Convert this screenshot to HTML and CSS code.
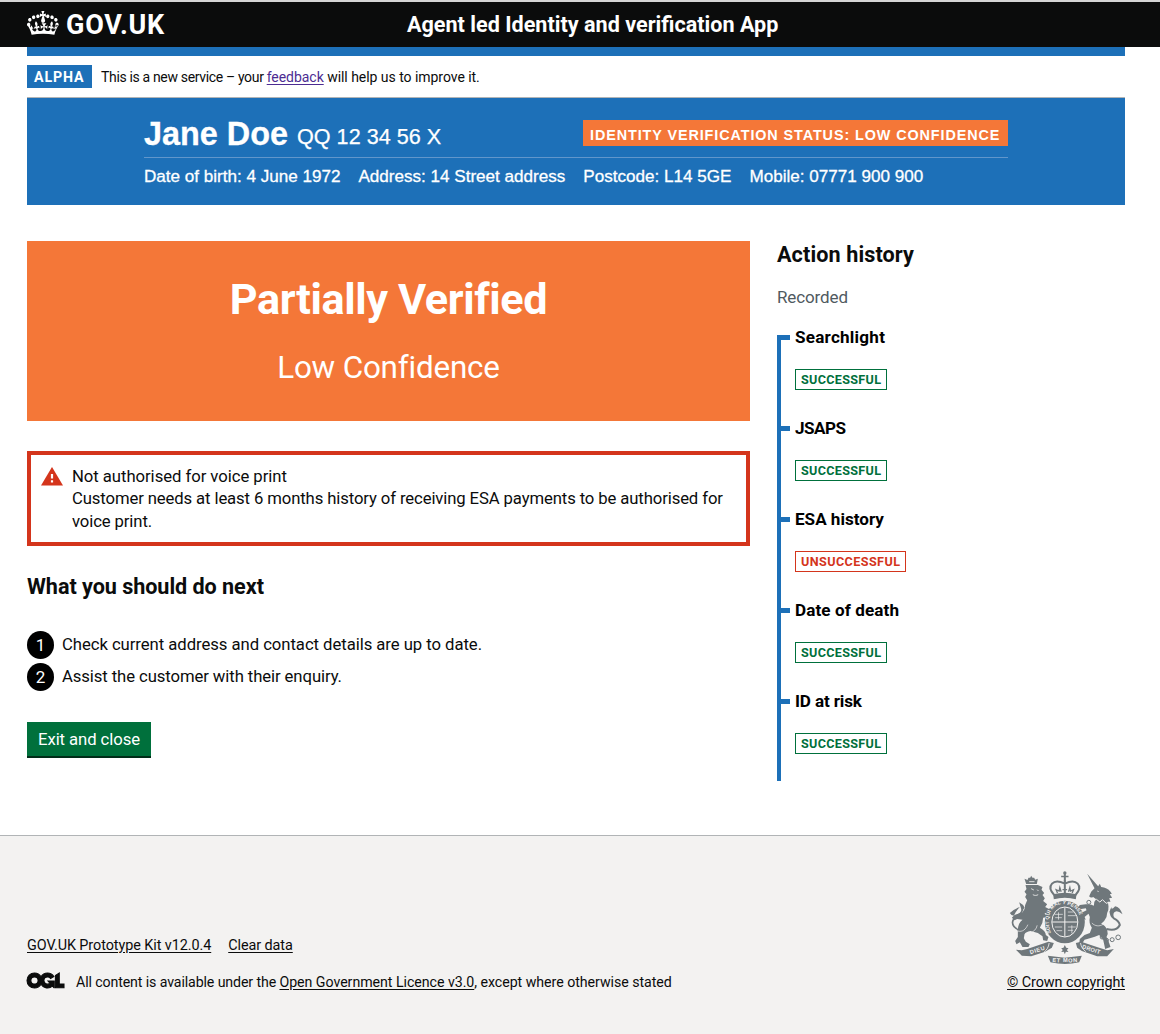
FILE: index.html
```html
<!DOCTYPE html>
<html lang="en">
<head>
<meta charset="utf-8">
<title>Agent led Identity and verification App</title>
<link rel="stylesheet" href="styles.css">
</head>
<body>
<header class="header">
  <div class="width header-inner">
    <a class="logo">
      <svg class="crown" viewBox="0 4 36 25.5" preserveAspectRatio="none" aria-hidden="true"><path fill="currentColor" d="M6.7 12.2c1 .4 2.1-.1 2.5-1s-.1-2.1-1-2.5c-1-.4-2.1.1-2.5 1-.4 1 0 2.1 1 2.5m-4.3 2.5c.9.4 2.1-.1 2.5-1s-.1-2.1-1-2.5c-1-.4-2.1.1-2.5 1-.5 1 0 2.1 1 2.5m-1.3 4.8c1 .4 2.1-.1 2.5-1 .4-1-.1-2.1-1-2.5-1-.4-2.1.1-2.5 1-.4 1 0 2.1 1 2.5m10.4-8.300c1 .4 2.1-.1 2.5-1s-.1-2.1-1-2.5c-1-.4-2.1.1-2.5 1s0 2.1 1 2.5m17.4 1c-1 .4-2.1-.1-2.5-1s.1-2.1 1-2.5c1-.4 2.1.1 2.5 1 .5 1 0 2.1-1 2.500m4.300 2.500c-.9.4-2.1-.1-2.5-1s.1-2.1 1-2.5c1-.4 2.1.1 2.5 1 .5 1 0 2.1-1 2.500m1.300 4.800c-1 .4-2.1-.1-2.5-1-.4-1 .1-2.1 1-2.5 1-.4 2.1.1 2.5 1 .4 1 0 2.100-1 2.500m-10.400-8.300c-1 .4-2.1-.1-2.5-1s.1-2.1 1-2.5c1-.4 2.1.1 2.5 1s0 2.1-1 2.500m-5.300-2.400 2.400 1.300V6.500l-2.400.8c-.1-.1-.1-.2-.2-.3s1-3 1-3h-3.400s1 2.900 1 3-.2.2-.3.3l-2.400-.7v3.500L17 8.800c.1.1.2.2.4.3l-1.400 4.200c-.1.2-.1.4-.1.6 0 1.100.8 2 1.900 2.200h.7c1.100-.2 1.900-1.100 1.900-2.100 0-.2 0-.4-.1-.6l-1.400-4.200c.3-.2.3-.3.4-.4M18 27.200c4.600 0 8.900.3 12.800.9 1.400-4.700 2.900-7.300 4.500-9.100l-2.500-.9c.3 1.300.3 1.900 0 2.800-.4-.4-.8-1.200-1.100-2.400l-1.200 4.200c.8-.5 1.300-.9 2-.9-1.200 2.600-2.700 3.200-3.600 3-1.200-.2-1.700-1.300-1.500-2.200.3-1.300 1.600-1.600 2.200-.1 1.200-2.400-.8-3.100-2.100-2.400 1.900-2 2.200-3.600.6-5.700-2.200 1.700-2.200 3.300-1.200 5.600-1.300-1.500-3.300-.7-2.500 1.700.9-1.400 2.100-.5 2 .8-.2 1.200-1.700 2.100-3.700 1.900-2.800-.2-3-2.200-3-3.700.7-.1 1.900.5 3 2l.4-4.400c-1.100 1.200-2.200 1.400-3.300 1.400.4-1.200 2.100-3.100 2.100-3.100h-5.500s1.800 2 2.100 3.100c-1.100 0-2.200-.3-3.300-1.400l.4 4.400c1.100-1.500 2.300-2.100 3-2-.1 1.600-.2 3.500-3 3.700-1.900.2-3.500-.7-3.700-1.900-.2-1.300 1-2.200 1.900-.8.7-2.400-1.300-3.100-2.600-1.700 1-2.300.9-4-1.200-5.600-1.600 2.100-1.300 3.700.6 5.700-1.300-.7-3.200 0-2.100 2.400.6-1.500 1.900-1.100 2.200.1.2.9-.4 1.900-1.500 2.200-1 .2-2.500-.5-3.700-3 .7 0 1.300.4 2 .9L4.900 18.500c-.3 1.200-.7 1.900-1.200 2.400-.3-.8-.2-1.500 0-2.800l-2.900.9c1.600 1.800 3.100 4.400 4.400 9.100 3.900-.6 8.200-.9 12.800-.9"/></svg>
      <span class="logo-text">GOV.UK</span>
    </a>
    <span class="service">Agent led Identity and verification App</span>
  </div>
</header>
<div class="width">
  <div class="bluebar"></div>
  <div class="phase">
    <strong class="phase-tag">ALPHA</strong>
    <span class="phase-text"><span class="phase-lead">This is a new service – your </span><a class="visited">feedback</a> will help us to improve it.</span>
  </div>
  <section class="customer">
    <div class="customer-top">
      <div class="customer-id"><strong class="customer-name">Jane Doe</strong><span class="customer-nino">QQ 12 34 56 X</span></div>
      <strong class="status">IDENTITY VERIFICATION STATUS: LOW CONFIDENCE</strong>
    </div>
    <div class="customer-details">
      <span>Date of birth: 4 June 1972</span><span>Address: 14 Street address</span><span>Postcode: L14 5GE</span><span>Mobile: 07771 900 900</span>
    </div>
  </section>
  <div class="columns">
    <main class="main">
      <div class="panel">
        <h1 class="panel-title">Partially Verified</h1>
        <div class="panel-body">Low Confidence</div>
      </div>
      <div class="warning">
        <svg class="warning-icon" viewBox="0 0 22 19" aria-hidden="true"><path fill="#d4351c" d="M11 0 22 18.500H0z"/><path fill="#fff" d="M9.900 7h2.200v4.600H9.900zM9.900 13.200h2.200v2.300H9.900z"/></svg>
        <p class="body warning-text"><span class="warning-title">Not authorised for voice print</span><br>Customer needs at least 6 months history of receiving ESA payments to be authorised for<br>voice print.</p>
      </div>
      <h2 class="heading next">What you should do next</h2>
      <ol class="steps">
        <li class="step"><span class="num">1</span><span class="body">Check current address and contact details are up to date.</span></li>
        <li class="step"><span class="num">2</span><span class="body second">Assist the customer with their enquiry.</span></li>
      </ol>
      <button class="button" type="button">Exit and close</button>
    </main>
    <aside class="history">
      <h2 class="heading history-heading">Action history</h2>
      <p class="recorded">Recorded</p>
      <ul class="timeline">
        <li class="event"><h3 class="event-title wide">Searchlight</h3><strong class="tag">SUCCESSFUL</strong></li>
        <li class="event"><h3 class="event-title narrow">JSAPS</h3><strong class="tag">SUCCESSFUL</strong></li>
        <li class="event"><h3 class="event-title">ESA history</h3><strong class="tag tag-bad">UNSUCCESSFUL</strong></li>
        <li class="event"><h3 class="event-title date">Date of death</h3><strong class="tag">SUCCESSFUL</strong></li>
        <li class="event"><h3 class="event-title risk">ID at risk</h3><strong class="tag">SUCCESSFUL</strong></li>
      </ul>
    </aside>
  </div>
</div>
<footer class="footer">
  <div class="width footer-inner">
    <div class="footer-meta">
      <div class="footer-links"><a>GOV.UK Prototype Kit v12.0.4</a><a>Clear data</a></div>
      <div class="licence">
        <svg class="ogl" viewBox="0 0 483.200 195.700" aria-hidden="true"><path fill="currentColor" stroke="currentColor" stroke-width="14" d="M421.5 142.8V.1l-50.7 32.3v161.1h112.4v-50.7zm-122.3-9.6A47.12 47.12 0 0 1 221 97.8c0-26 21.1-47.1 47.1-47.1 16.7 0 31.4 8.7 39.7 21.8l42.7-27.2A97.63 97.63 0 0 0 268.1 0c-36.5 0-68.3 20.1-85.1 49.7A98 98 0 0 0 97.8 0C43.9 0 0 43.9 0 97.8s43.9 97.8 97.8 97.8c36.5 0 68.3-20.1 85.1-49.7a97.76 97.76 0 0 0 149.6 25.4l19.4 22.2h3v-87.800h-80l24.300 27.500zM97.800 145c-26 0-47.100-21.100-47.100-47.100s21.100-47.100 47.100-47.100 47.100 21.100 47.100 47.100S123.800 145 97.800 145"/></svg>
        <span class="licence-text"><span class="licence-lead">All content is available under the </span><a>Open Government Licence v3.0</a>, except where otherwise stated</span>
      </div>
    </div>
    <div class="copyright">
      <svg class="arms" viewBox="58 34 344 282" aria-label="Royal coat of arms">
        <g fill="#6f777b">
          <!-- lion -->
          <path d="M109 73L104 57L113 61L116 54L121 54L124 48L128 54L133 54L136 60L144 57L141 73Z"/>
          <path d="M107 76L144 76L158 82L155 90L163 100L158 106L165 116L160 124L172 134L166 142L182 150L180 162L164 160L172 172L160 174Q160 190 150 204Q168 214 168 226L176 232L172 244L160 242L158 230L144 220L122 214Q108 216 104 224L102 236L108 246L120 254L116 262L98 262L90 248L80 254L76 244L84 232L84 212Q84 190 98 180L82 178L74 182L66 174L74 166L98 158Q106 150 106 136L112 122L106 112L110 104L104 96L110 88Z"/>
          <path d="M60 160Q72 148 90 142Q78 154 72 168Q64 168 60 160ZM88 128Q100 134 104 144L96 154Z"/>
          <!-- unicorn -->
          <path d="M292 42L325 80L330 72L334 82Q352 84 362 96L366 102L360 104L367 114L358 116L362 126L354 126L356 140Q357 152 352 160L350 172Q344 186 334 192Q346 196 352 210Q356 222 350 232L358 250L362 262L346 268L344 258L340 240L328 226Q316 232 300 236L284 240L278 250L268 252L270 238L284 226L300 220L306 204Q296 190 300 172L296 162L284 172L288 180L276 176L274 160L290 152L288 146L274 148L266 156L262 146L270 136L288 134Q304 132 312 138Q312 126 318 118L310 112Q302 116 298 110L304 96L314 86Z"/>
          <path d="M366 170Q354 154 366 142Q362 154 376 140Q390 142 398 164Q384 152 376 156Q368 160 372 172Z"/>
          <!-- garter -->
          <ellipse cx="225" cy="187" rx="60" ry="64"/>
          <!-- ribbon -->
          <path d="M78 270L96 272L112 268L176 246L192 250L186 264L166 276L124 290L96 288ZM258 250L274 246L328 264L352 272L372 268L352 290L322 290L276 274L262 264ZM174 288L225 294L276 288L268 308Q226 318 182 308Z"/>
          <path d="M225 256L229 264L236 266L231 271L236 277L228 276L225 284L222 276L214 277L219 271L214 266L221 264Z"/>
          <circle cx="225" cy="40" r="5"/><path d="M214 48h22v5h-22zM222 42h6v24h-6zM190 104L192 119Q225 110 258 119L260 104Q225 94 190 104Z"/>
        </g>
        <g fill="none" stroke="#6f777b">
          <!-- tails -->
          <path d="M90 212Q68 204 68 188Q70 174 88 164Q100 156 98 140" stroke-width="5"/>
          <path d="M350 208Q380 216 390 196Q388 184 372 176Q362 168 362 154" stroke-width="6"/>
          <!-- crown -->
          <path d="M193 106C168 78 190 54 225 72C260 54 282 78 257 106M225 62V102" stroke-width="6"/>
          <path d="M203 100L199 90L208 94L210 84L214 96M247 100L251 90L242 94L240 84L236 96M218 90h14" stroke-width="4"/>
          <g stroke-width="3"><circle cx="337" cy="232" r="6"/><circle cx="350" cy="242" r="6"/><circle cx="367" cy="240" r="6"/><circle cx="385" cy="233" r="7"/><circle cx="297" cy="128" r="6"/></g>
        </g>
        <g fill="none" stroke="#f3f2f1" stroke-width="3">
          <ellipse cx="225" cy="187" rx="39" ry="45"/>
          <path d="M193 121Q225 112 257 121" stroke-width="3"/>
          <path d="M225 143v88M187 187h76" stroke-width="3"/>
          <path d="M194 164h25M196 174h20M234 157h18M234 168h25M195 202h22M200 213h17M234 202h24M234 212h16M206 158v22M246 197v24" stroke-width="2"/>
          <path d="M124 87l8 4M142 90l4 4M129 105c5 3 11 3 16 0M118 66h16" stroke-width="2.500"/>
          <path d="M308 124l12-5 10 8 8-7 11 11 8-3" stroke-width="3"/>
          <path d="M322 94l5 2M84 214c14 4 24-5 30-19M142 197c-2 12-10 18-21 24M306 190c10 10 22 11 34 4" stroke-width="2"/>
          <path d="M178 250c-2 14-7 20-16 28M272 250c2 12 8 20 16 26" stroke-width="2.500"/>
        </g>
        <defs>
          <path id="gt" d="M184 220C158 144 210 128 225 134C274 141 281 185 263 220"/>
          <path id="r1" d="M122 284L170 268"/><path id="r2" d="M276 266L332 284"/><path id="r3" d="M187 306Q226 311 266 306"/>
        </defs>
        <g class="motto"><text class="garter"><textPath href="#gt" textLength="176">SOIT QUI MAL Y PENSE</textPath></text><text><textPath href="#r1" textLength="46">DIEU</textPath></text><text><textPath href="#r2" textLength="56">DROIT</textPath></text><text><textPath href="#r3" textLength="76">ET MON</textPath></text></g>
      </svg>
      <a class="copyright-link">© Crown copyright</a>
    </div>
  </div>
</footer>
</body>
</html>
```
FILE: styles.css
```css
* { box-sizing: border-box; }
body { margin: 0; background: #fff; color: #0b0c0c; font-family: Roboto, "Liberation Sans", sans-serif; font-size: 17px; line-height: 22.5px; }
h1, h2, h3, p, ol, ul { margin: 0; padding: 0; }
ol, ul { list-style: none; }
a { color: inherit; text-decoration: underline; text-underline-offset: 2px; }
.width { width: 1098px; margin-left: 27px; }
.header { height: 47px; border-top: 2px solid #d5d5d5; background: #0b0c0c; color: #fff; }
.header-inner { height: 45px; display: flex; align-items: center; }
.logo { display: flex; align-items: center; width: 380px; gap: 7px; text-decoration: none; }
.crown { width: 32px; height: 25px; margin-top: -3px; }
.logo-text { font-weight: 700; font-size: 27px; line-height: 30px; letter-spacing: .8px; }
.service { padding-top: 2px; font-size: 21.6px; font-weight: 700; white-space: nowrap; }
.bluebar { height: 9px; background: #1d70b8; }
.phase { height: 42px; display: flex; align-items: center; gap: 9px; border-bottom: 1px solid #b1b4b6; font-size: 14.4px; }
.phase-text { padding-top: 1px; font-size: 14px; letter-spacing: -.04px; }
.phase-lead { letter-spacing: -.34px; }
.phase-tag { width: 65px; height: 23px; padding-left: 7px; line-height: 24.500px; background: #1d70b8; color: #fff; font-size: 14.2px; letter-spacing: .9px; }
.visited { color: #4c2c92; }
.customer { height: 107px; padding: 17px 117px 0; background: #1d70b8; color: #fff; font-family: "Liberation Sans", Arial, sans-serif; }
.customer-top { display: flex; justify-content: space-between; height: 43px; border-bottom: 1px solid #6196cb; }
.customer-id { display: flex; align-items: baseline; gap: 9px; line-height: 38px; }
.customer-name { font-size: 32.4px; -webkit-text-stroke: .3px; }
.customer-nino { font-size: 21.6px; line-height: 20px; transform: translateY(-1px); -webkit-text-stroke: .25px; }
.status { width: 425px; height: 26px; margin-top: 5px; padding-left: 7px; line-height: 30px; background: #f47738; font-size: 14.4px; letter-spacing: .9px; white-space: nowrap; }
.customer-details { display: flex; gap: 18px; padding-top: 8px; font-size: 17.1px; letter-spacing: -.01px; -webkit-text-stroke: .3px; }
.columns { display: flex; gap: 27px; margin-top: 36px; height: 594px; }
.main { width: 723px; }
.panel { height: 180px; padding-top: 32px; background: #f47738; color: #fff; text-align: center; }
.panel-title { font-size: 43.2px; line-height: 54px; letter-spacing: -.4px; }
.panel-body { margin-top: 22px; font-size: 31.4px; line-height: 38px; letter-spacing: -.18px; }
.warning { display: flex; gap: 9px; height: 95px; margin-top: 30px; padding: 10px; border: 4px solid #d4351c; }
.warning-icon { width: 22px; height: 19px; margin-top: 2px; flex: none; }
.body { font-size: 16.7px; letter-spacing: -.05px; white-space: nowrap; }
.warning-text { padding-top: .6px; letter-spacing: -.115px; }
.warning-title { letter-spacing: -.05px; }
.second { letter-spacing: -.09px; }
.heading { font-size: 21.6px; line-height: 27px; letter-spacing: -.05px; }
.history-heading { letter-spacing: .11px; }
.next { margin-top: 27px; }
.steps { margin-top: 31px; }
.step { display: flex; align-items: center; gap: 8px; height: 28px; margin-bottom: 4px; }
.step .body { line-height: 22px; }
.num { width: 27px; height: 28px; border-radius: 50%; background: #000; color: #fff; text-align: center; line-height: 28px; }
.button { display: block; width: 124px; height: 36px; margin-top: 31px; padding: 0; border: 0; border-bottom: 2px solid #002d18; background: #00703c; color: #fff; font: 16.7px Roboto, sans-serif; letter-spacing: -.08px; }
.recorded { margin-top: 18px; color: #505a5f; font-size: 17px; letter-spacing: -.12px; }
.history { width: 348px; }
.timeline { margin-top: 26px; height: 446px; border-left: 4px solid #1d70b8; }
.event { position: relative; height: 91px; padding-left: 14px; }
.event::before { content: ""; position: absolute; left: 0; top: 0; width: 9px; height: 5px; background: #1d70b8; }
.event-title { font-size: 17.1px; line-height: 22px; transform: translateY(-9px); color: #000; }
.wide { letter-spacing: .23px; }
.narrow { letter-spacing: -.5px; }
.date { letter-spacing: .09px; }
.risk { letter-spacing: -.14px; }
.tag { display: block; width: 92px; height: 21px; margin-top: 12px; padding-left: 5px; border: 1px solid #00703c; color: #00703c; font-size: 12.600px; line-height: 20px; letter-spacing: .32px; }
.tag-bad { width: 111px; border-color: #d4351c; color: #d4351c; letter-spacing: .42px; }
.footer { height: 199px; border-top: 1px solid #b1b4b6; background: #f3f2f1; font-size: 14.4px; }
.footer-inner { display: flex; justify-content: space-between; align-items: flex-end; height: 158px; }
.footer-links { display: flex; gap: 17px; margin-bottom: 13px; letter-spacing: -.07px; }
.licence { display: flex; gap: 12px; align-items: center; }
.licence-text { padding-bottom: 1px; font-size: 14.2px; letter-spacing: -.045px; }
.licence-lead { letter-spacing: -.12px; }
.ogl { width: 37px; height: 15px; margin-top: -4px; overflow: visible; }
.copyright { display: flex; flex-direction: column; align-items: flex-end; }
.copyright-link { letter-spacing: -.07px; }
.arms { width: 115px; height: 94px; margin: 0 1px 7px 0; }
.motto { fill: #f3f2f1; font: 700 17px "Liberation Sans", sans-serif; }
.garter { font-size: 15px; }
```
